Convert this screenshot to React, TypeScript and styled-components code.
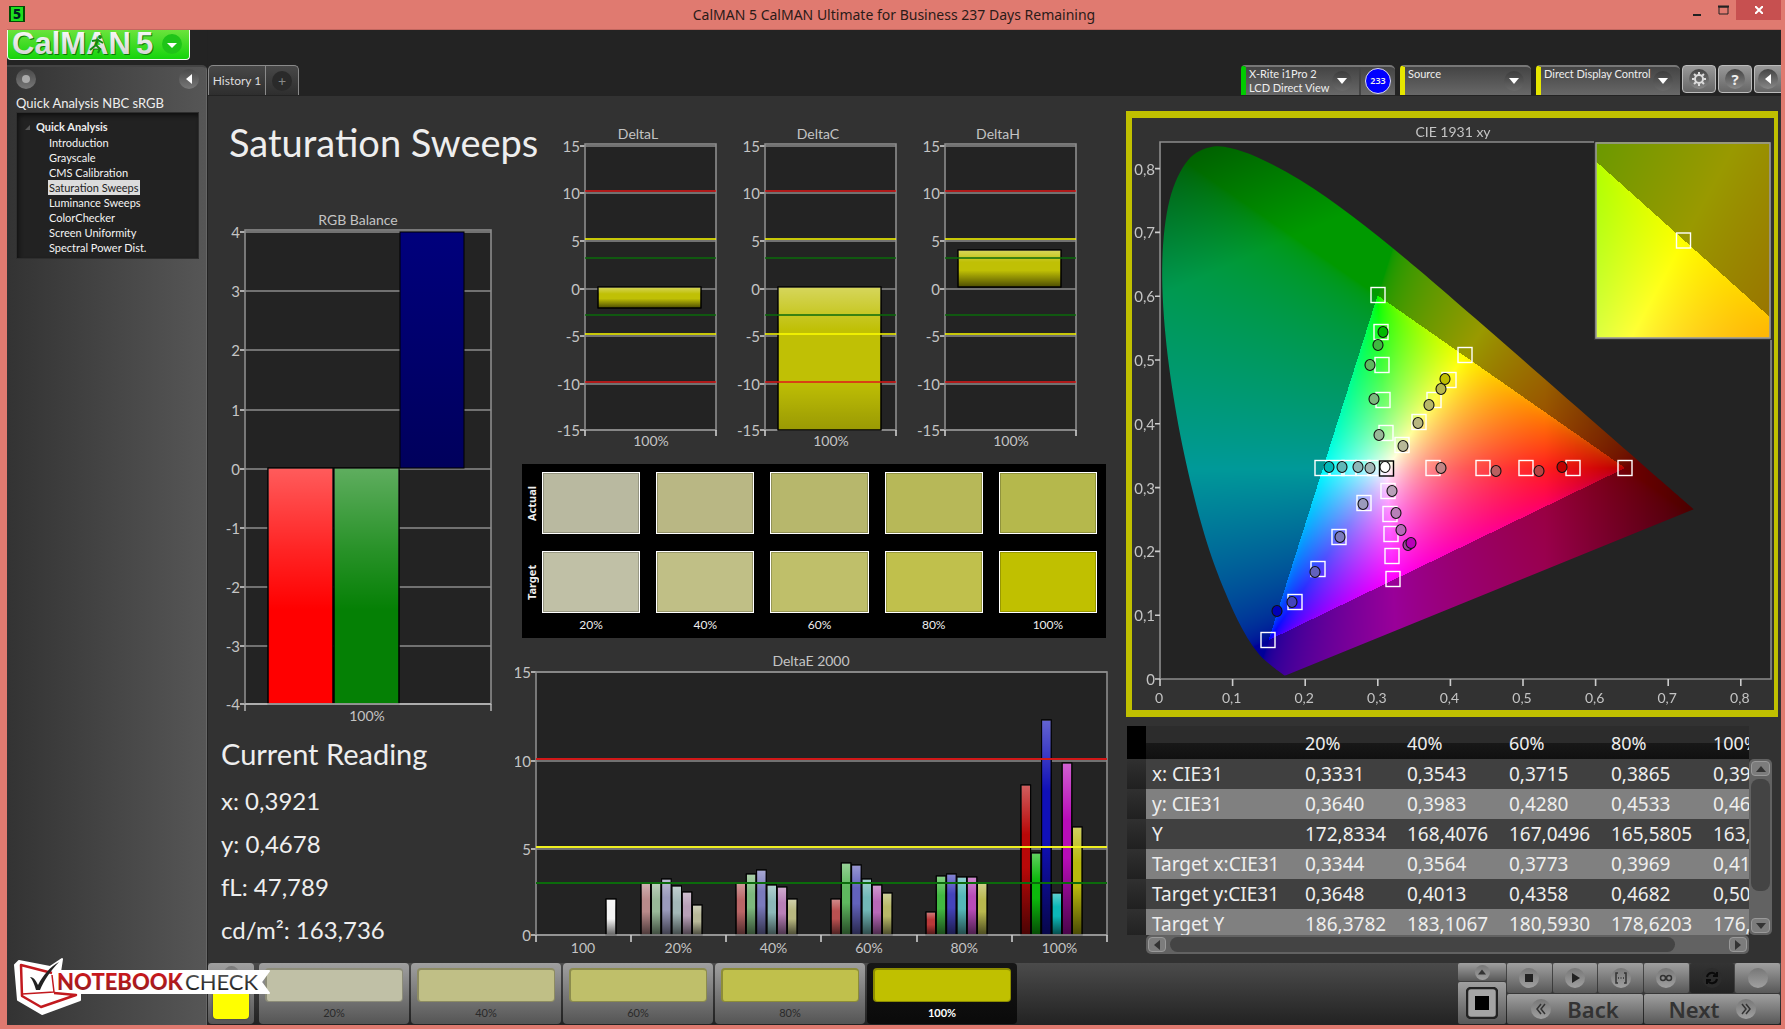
import React, { useEffect, useRef } from "react";
import styled, { createGlobalStyle } from "styled-components";

const sans = 'Lato, "Noto Sans", sans-serif';
const wide = '"Noto Sans", "Open Sans", sans-serif';
const grey = "#c4c4c4";

const GlobalStyle = createGlobalStyle`
  * { box-sizing: border-box; }
  body { margin: 0; background: #e07a70; font-family: ${sans}; color: #eee; }
  button { font-family: inherit; color: inherit; border: 0; padding: 0; margin: 0; background: none; cursor: pointer; }
  h1, h2, p, ul { margin: 0; padding: 0; font-weight: 400; }
  ul { list-style: none; }
  svg { display: block; }
`;

/* ---------- window frame ---------- */

const Frame = styled.div`
  min-height: 100vh;
  display: flex;
  flex-direction: column;
  padding: 0 4px 4px 7px;
`;

const TitleBar = styled.header`
  display: grid;
  grid-template-columns: 120px 1fr 120px;
  height: 30px;
  color: #2b1a18;
  border-bottom: 1px solid #c2675f;
`;

const AppIcon = styled.svg`
  margin: 6px 0 0 2px;
`;

const WindowTitle = styled.div`
  text-align: center;
  font-family: ${wide};
  font-size: 14px;
  line-height: 29px;
  white-space: nowrap;
`;

const WindowButtons = styled.div`
  display: flex;
  justify-content: flex-end;
  align-items: flex-start;
`;

const WindowButton = styled.button<{ $close?: boolean }>`
  width: ${(p) => (p.$close ? 45 : 26)}px;
  height: 20px;
  display: grid;
  place-items: center;
  background: ${(p) => (p.$close ? "#c75050" : "transparent")};
`;

const Body = styled.div`
  flex: 1;
  display: flex;
  background: #232323;
`;

/* ---------- sidebar ---------- */

const Left = styled.div`
  width: 200px;
  flex: none;
  display: flex;
  flex-direction: column;
  gap: 5px;
`;

const LogoButton = styled.button`
  width: 183px;
  height: 30px;
  border: 1px solid #f0fff0;
  border-top: 0;
  border-radius: 0 0 4px 4px;
  overflow: hidden;
  background: linear-gradient(#6be33c, #14d40c);
`;

const Sidebar = styled.nav`
  flex: 1;
  padding: 0 7px 0 9px;
  background: linear-gradient(90deg, #333, #565656);
  border-top: 2px solid #444;
  border-right: 1px solid #666;
  border-radius: 0 5px 0 0;
`;

const SideTools = styled.div`
  display: flex;
  justify-content: space-between;
  padding: 2px 0 5px;
`;

const RoundButton = styled.button`
  width: 20px;
  height: 20px;
  flex: none;
  display: grid;
  place-items: center;
  border-radius: 50%;
  background: linear-gradient(#4a4a4a, #777);
`;

const SideTitle = styled.h2`
  font-size: 13px;
  line-height: 18px;
  white-space: nowrap;
`;

const Tree = styled.div`
  padding: 6px 0 6px 8px;
  height: 147px;
  background: #222;
  border: 1px solid #2e2e2e;
  box-shadow: inset 2px 3px 4px #111;
`;

const TreeHead = styled.button`
  display: flex;
  align-items: center;
  gap: 6px;
  font-size: 11px;
  line-height: 16px;
  font-weight: 700;
`;

const TreeList = styled.ul`
  padding-left: 23px;
  height: 116px;
  display: flex;
  flex-direction: column;
  justify-content: space-between;
  align-items: flex-start;
`;

const TreeItem = styled.a<{ $active?: boolean }>`
  display: block;
  padding: 0 1px;
  font-size: 11px;
  line-height: 15px;
  white-space: nowrap;
  text-decoration: none;
  color: ${(p) => (p.$active ? "#222" : "#f4f4f4")};
  background: ${(p) => (p.$active ? "#dcdcdc" : "transparent")};
`;

/* ---------- top bar ---------- */

const Right = styled.div`
  flex: 1;
  min-width: 0;
  display: flex;
  flex-direction: column;
  border-left: 1px solid #222;
`;

const TopBar = styled.div`
  height: 66px;
  display: flex;
  justify-content: space-between;
  align-items: flex-end;
  overflow: hidden;
`;

const Tabs = styled.div`
  display: flex;
  height: 30px;
  margin-bottom: 1px;
`;

const Tab = styled.button<{ $last?: boolean }>`
  width: ${(p) => (p.$last ? 33 : 58)}px;
  font-size: 12px;
  line-height: 30px;
  color: #ddd;
  white-space: nowrap;
  display: grid;
  place-items: center;
  background: linear-gradient(#484848, #2e2e2e);
  border: solid #8a8a8a;
  border-width: 1px 1px 0 ${(p) => (p.$last ? 0 : 1)}px;
  border-radius: ${(p) => (p.$last ? "0 5px 0 0" : "5px 0 0 0")};
`;

const PlusDisc = styled.span`
  width: 20px;
  height: 20px;
  border-radius: 50%;
  background: #2a2a2a;
  color: #888;
  font-size: 14px;
  line-height: 20px;
`;

const Tools = styled.div`
  display: flex;
  align-items: flex-start;
  height: 31px;
`;

const Device = styled.button<{ $width: number; $mark: string }>`
  width: ${(p) => p.$width}px;
  height: 30px;
  display: flex;
  align-items: stretch;
  text-align: left;
  border-top: 2px solid #777;
  border-left: 5px solid ${(p) => p.$mark};
  border-radius: 4px 5px 0 0;
  background: linear-gradient(#444, #686868);
  & + & { margin-left: 5px; }
`;

const DeviceText = styled.span`
  flex: 1;
  padding-left: 3px;
  font-size: 11px;
  line-height: 14px;
  white-space: pre;
`;

const Chevron = styled.span`
  width: 20px;
  height: 20px;
  margin: 4px 7px 0 0;
  border-radius: 50%;
  display: grid;
  place-items: center;
  background: linear-gradient(#3c3c3c, #6a6a6a);
`;

const Count = styled.span`
  width: 36px;
  border-left: 2px solid #444;
  display: grid;
  place-items: center;
`;

const CountDisc = styled.span`
  width: 26px;
  height: 26px;
  border-radius: 50%;
  border: 1px solid #dde;
  background: #00f;
  font-family: ${wide};
  font-size: 9px;
  font-weight: 600;
  line-height: 24px;
  text-align: center;
`;

const ToolButton = styled.button<{ $cut?: boolean }>`
  width: ${(p) => (p.$cut ? 27 : 34)}px;
  height: 28px;
  margin-left: 2px;
  display: grid;
  place-items: center;
  border: 1px solid #bbb;
  border-right-width: ${(p) => (p.$cut ? 0 : 1)}px;
  border-radius: ${(p) => (p.$cut ? "4px 0 0 4px" : "4px")};
  background: linear-gradient(#999, #666);
`;

const ToolDisc = styled.span`
  width: 20px;
  height: 20px;
  border-radius: 50%;
  display: grid;
  place-items: center;
  background: linear-gradient(#444, #888);
  font-family: ${wide};
  font-size: 15px;
  font-weight: 700;
  line-height: 20px;
`;

/* ---------- main area ---------- */

const Main = styled.main`
  flex: 1;
  display: grid;
  grid-template-columns: 276fr 593fr 652fr;
  column-gap: 18px;
  padding: 0 3px 0 13px;
  background: #323232;
`;

const Column = styled.section<{ $top: number }>`
  min-width: 0;
  padding-top: ${(p) => p.$top}px;
`;

const PageTitle = styled.h1`
  padding-left: 8px;
  font-size: 38px;
  line-height: 48px;
  margin-bottom: 42px;
  white-space: nowrap;
`;

const Plot = styled.svg`
  width: 100%;
  height: auto;
`;

const ReadingTitle = styled.h2`
  margin: 5px 0 4px;
  font-size: 29px;
  line-height: 42px;
`;

const Reading = styled.p`
  font-size: 24px;
  line-height: 43px;
  white-space: nowrap;
`;

const DeltaRow = styled.div`
  display: grid;
  grid-template-columns: repeat(3, 1fr);
  padding: 0 13px 0 40px;
`;

const Swatches = styled.div`
  display: grid;
  grid-template-columns: 20px 1fr;
  grid-template-rows: 62px 62px 18px;
  row-gap: 17px;
  margin: 12px 2px 10px 7px;
  height: 174px;
  padding: 8px 9px 0 0;
  background: #000;
`;

const SwatchRow = styled.div<{ $labels?: boolean }>`
  grid-column: 2;
  display: grid;
  grid-template-columns: repeat(5, 1fr);
  column-gap: 16px;
  margin-top: ${(p) => (p.$labels ? -14 : 0)}px;
`;

const SideLabel = styled.div`
  writing-mode: vertical-rl;
  transform: rotate(180deg);
  font-family: ${wide};
  font-size: 11px;
  font-weight: 700;
  line-height: 20px;
  text-align: center;
`;

const Swatch = styled.div<{ $color: string }>`
  border: 1px solid #fff;
  background: ${(p) => p.$color};
  box-shadow: inset 0 0 0 1px #0003;
`;

const SwatchLabel = styled.div`
  font-size: 12px;
  line-height: 18px;
  text-align: center;
`;

const CieFrame = styled.div`
  display: grid;
  border: solid #c0c000;
  border-width: 7px 4px 7px 6px;
  & > * { grid-area: 1 / 1; }
`;

const GamutCanvas = styled.canvas`
  width: 100%;
  height: auto;
`;

const Label = styled.text`
  font-family: ${sans};
  font-size: 15px;
  fill: ${grey};
`;

const Heading = styled(Label)`
  font-size: 14px;
`;

/* ---------- data table ---------- */

const TableArea = styled.div`
  display: grid;
  grid-template-columns: 1fr 23px;
  margin: 9px 6px 0 1px;
`;

const TableClip = styled.div`
  height: 209px;
  overflow: hidden;
`;

const Table = styled.table`
  width: 682px;
  table-layout: fixed;
  border-collapse: collapse;
  font-family: ${wide};
  font-size: 19px;
  line-height: 24px;
`;

const HeadRow = styled.tr`
  height: 33px;
  background: linear-gradient(#2c2c2c 50%, #181818 50%, #101010);
`;

const Row = styled.tr<{ $light: boolean }>`
  height: 30px;
  background: ${(p) => (p.$light ? "#808080" : "#404040")};
`;

const Cell = styled.td`
  padding: 0 0 0 6px;
  text-align: left;
  font-weight: 400;
  white-space: nowrap;
`;
const HeadCell = styled(Cell).attrs({ as: "th" })`
  font-size: 18px;
`;
const RowName = styled(Cell).attrs({ as: "th" })``;

const Grip = styled.td<{ $head?: boolean }>`
  padding: 0;
  background: ${(p) => (p.$head ? "#000" : "linear-gradient(#303030, #202020)")};
`;

const ScrollV = styled.div`
  margin-top: 33px;
  padding: 2px;
  display: flex;
  flex-direction: column;
  gap: 3px;
  border-radius: 5px;
  background: #626262;
`;

const ScrollH = styled.div`
  margin-left: 19px;
  padding: 2px;
  display: flex;
  gap: 4px;
  border-radius: 5px;
  background: #626262;
`;

const ScrollButton = styled.button<{ $w: number }>`
  width: ${(p) => p.$w}px;
  height: 15px;
  flex: none;
  display: grid;
  place-items: center;
  border: 1px solid #999;
  border-radius: 4px;
  background: #7c7c7c;
`;

const Track = styled.div<{ $column?: boolean }>`
  flex: 1;
  display: flex;
  flex-direction: ${(p) => (p.$column ? "column" : "row")};
`;

const Thumb = styled.div<{ $part: string }>`
  flex: 0 0 ${(p) => p.$part};
  border-radius: 8px;
  background: #444;
`;

/* ---------- bottom bar ---------- */

const Bottom = styled.footer`
  height: 62px;
  display: flex;
  background: linear-gradient(#4b4b4b, #222);
`;

const Strip = styled.div`
  flex: 1;
  display: flex;
  gap: 2px;
`;

const Patch = styled.button<{ $active?: boolean }>`
  width: 150px;
  height: 61px;
  padding: 5px 6px 0;
  display: flex;
  flex-direction: column;
  border-radius: 4px;
  color: ${(p) => (p.$active ? "#fff" : "#2a2a2a")};
  background: ${(p) => (p.$active ? "linear-gradient(#161616, #0a0a0a)" : "linear-gradient(#a0a0a0, #555)")};
  font-size: 11px;
  font-weight: ${(p) => (p.$active ? 700 : 400)};
  line-height: 22px;
`;

const PatchColor = styled.span<{ $color: string }>`
  width: 100%;
  height: 36px;
  border-radius: 4px;
  border: 1px solid #0004;
  border-width: 2px 1px 1px 2px;
  background: ${(p) => p.$color};
`;

const PatchLabel = styled.span`
  width: 100%;
  text-align: center;
`;

const CurrentPatch = styled.button`
  width: 46px;
  height: 61px;
  margin-right: 3px;
  padding: 3px 5px 5px;
  display: flex;
  flex-direction: column;
  align-items: center;
  justify-content: space-between;
  border-radius: 4px;
  background: linear-gradient(#a0a0a0, #555);
`;

const CurrentColor = styled.span`
  width: 36px;
  height: 36px;
  border-radius: 4px;
  background: #ff0;
  box-shadow: 0 0 2px #333;
`;

const Transport = styled.div`
  display: grid;
  grid-template-columns: 48px 273px;
  gap: 1px;
  padding-right: 1px;
  height: 61px;
`;

const StopColumn = styled.div`
  display: grid;
  grid-template-rows: 18px 1fr;
  gap: 1px;
`;

const Keys = styled.div`
  display: grid;
  grid-template-columns: repeat(6, 1fr);
  grid-template-rows: 30px 30px;
  gap: 1px;
`;

const Key = styled.button<{ $dark?: boolean; $wide?: boolean }>`
  grid-column: span ${(p) => (p.$wide ? 3 : 1)};
  display: flex;
  align-items: center;
  justify-content: center;
  gap: 16px;
  border-radius: 2px;
  color: #333;
  font-family: ${wide};
  font-size: 22px;
  line-height: 28px;
  font-weight: 600;
  background: ${(p) => (p.$dark ? "linear-gradient(#333, #222)" : "linear-gradient(#a0a0a0, #585858)")};
`;

const KeyDisc = styled.span<{ $dark?: boolean }>`
  width: 20px;
  height: 20px;
  border-radius: 50%;
  display: grid;
  place-items: center;
  background: ${(p) => (p.$dark ? "#2c2c2c" : "linear-gradient(#777, #a0a0a0)")};
`;

const SmallDisc = styled(KeyDisc)`
  width: 15px;
  height: 15px;
`;

const Watermark = styled.svg`
  position: absolute;
  left: 14px;
  bottom: 14px;
`;

/* ---------- drawings ---------- */

const Arrow = ({ dir, fill = "#fff", s = 10 }: { dir: "up" | "down" | "left" | "right"; fill?: string; s?: number }) => {
  const d = {
    up: "M0 8 5 2 10 8z",
    down: "M0 2 5 8 10 2z",
    left: "M8 0 2 5 8 10z",
    right: "M2 0 8 5 2 10z",
  }[dir];
  return (
    <svg width={s} height={s} viewBox="0 0 10 10">
      <path d={d} fill={fill} />
    </svg>
  );
};

const Logo = () => (
  <svg width="181" height="29" viewBox="0 0 181 29">
    <defs>
      <linearGradient id="lg" x1="0" y1="0" x2="0" y2="1">
        <stop offset="0" stopColor="#fff" />
        <stop offset="1" stopColor="#ccc" />
      </linearGradient>
    </defs>
    <g fontFamily='"Liberation Sans", Arial, sans-serif' fontWeight="700" fontSize="31">
      <text x="5" y="25" fill="#0a7a08">CalMAN</text>
      <text x="4" y="24" fill="url(#lg)">CalMAN</text>
      <text x="129" y="25" fill="#0a7a08">5</text>
      <text x="128" y="24" fill="url(#lg)">5</text>
    </g>
    <g stroke="#148a10" strokeWidth="2" fill="none">
      <circle cx="92" cy="7" r="1" />
      <path d="M84 11 90 10 95 13M90 10 88 15 92 19 90 23M88 15 82 20" />
    </g>
    <circle cx="164" cy="14" r="10" fill="#1fc418" />
    <path d="M159 13h10l-5 5z" fill="#fff" />
  </svg>
);

const Gear = () => (
  <svg width="16" height="16" viewBox="0 0 16 16" stroke="#ddd" fill="none">
    <circle cx="8" cy="8" r="4" strokeWidth="2" />
    <g strokeWidth="2">
      {[0, 45, 90, 135, 180, 225, 270, 315].map((a) => (
        <path key={a} d="M8 1v2.5" transform={`rotate(${a} 8 8)`} />
      ))}
    </g>
  </svg>
);

type Bar = { x: number; w: number; y0: number; y1: number; color: string };

const Gradients = () => (
  <defs>
    <linearGradient id="sheen" x1="0" y1="0" x2="0" y2="1">
      <stop offset="0" stopColor="#fff" stopOpacity=".35" />
      <stop offset=".33" stopColor="#fff" stopOpacity="0" />
      <stop offset=".55" stopColor="#000" stopOpacity="0" />
      <stop offset="1" stopColor="#000" stopOpacity=".6" />
    </linearGradient>
    <linearGradient id="gloss" x1="0" y1="0" x2="0" y2="1">
      <stop offset="0" stopColor="#fff" stopOpacity=".36" />
      <stop offset=".35" stopColor="#fff" stopOpacity="0.14" />
      <stop offset=".6" stopColor="#fff" stopOpacity="0" />
    </linearGradient>
    <linearGradient id="clipped" x1="0" y1="0" x2="0" y2="1">
      <stop offset="0" stopColor="#fff" stopOpacity=".35" />
      <stop offset=".3" stopColor="#fff" stopOpacity="0" />
      <stop offset=".65" stopColor="#000" stopOpacity="0" />
      <stop offset="1" stopColor="#000" stopOpacity=".2" />
    </linearGradient>
  </defs>
);

const BarShape = ({ b, shade = "sheen" }: { b: Bar; shade?: string }) => (
  <g stroke="#000" strokeWidth="1">
    <rect x={b.x} y={b.y0} width={b.w} height={b.y1 - b.y0} fill={b.color} />
    <rect x={b.x} y={b.y0} width={b.w} height={b.y1 - b.y0} fill={`url(#${shade})`} />
  </g>
);

type AxisProps = {
  x0: number; x1: number; y0: number; y1: number;
  rows: [string, number][];
};

const Axes = ({ x0, x1, y0, y1, rows }: AxisProps) => (
  <>
    <rect x={x0} y={y0} width={x1 - x0} height={y1 - y0} fill="#232323" />
    <g stroke="#8c8c8c" strokeWidth="1.4">
      {rows.map(([t, y]) => <path key={t} d={`M${x0} ${y}H${x1}`} />)}
    </g>
    {rows.map(([t, y]) => (
      <g key={t}>
        <path d={`M${x0 - 5} ${y}h5`} stroke="#ccc" strokeWidth="1.6" />
        <Label x={x0 - 5} y={y + 6} textAnchor="end">{t}</Label>
      </g>
    ))}
    <rect x={x0} y={y0} width={x1 - x0} height={y1 - y0} fill="none" stroke="#8c8c8c" strokeWidth="1.6" />
  </>
);

const RgbBalance = () => (
  <Plot viewBox="0 0 276 520" role="img" aria-label="RGB Balance">
    <defs>
      <linearGradient id="navy" x1="0" y1="0" x2="0" y2="1">
        <stop offset="0" stopColor="#00007c" />
        <stop offset="1" stopColor="#00005c" />
      </linearGradient>
    </defs>
    <Gradients />
    <Heading x="137" y="17" textAnchor="middle">RGB Balance</Heading>
    <Axes x0={24} x1={270} y0={22} y1={496}
      rows={[["4", 24], ["3", 83], ["2", 142], ["1", 202], ["0", 261], ["-1", 320], ["-2", 379], ["-3", 438], ["-4", 496]]} />
    <BarShape b={{ x: 47, w: 65, y0: 260, y1: 496, color: "#f00" }} shade="gloss" />
    <BarShape b={{ x: 113, w: 65, y0: 260, y1: 496, color: "#058005" }} shade="gloss" />
    <rect x="179" y="24" width="64" height="236" fill="url(#navy)" stroke="#000" />
    <path d="M24 496v7M270 496v7M24 496H270" stroke="#bbb" strokeWidth="1.4" />
    <Heading x="146" y="513" textAnchor="middle">100%</Heading>
  </Plot>
);

const limits: [string, number][] = [
  ["#e01818", 69], ["#ff0", 117], ["#0b6b0b", 136], ["#0b6b0b", 193], ["#ff0", 212], ["#e01818", 260],
];

const DeltaChart = ({ name, bar }: { name: string; bar: [number, number] }) => (
  <Plot viewBox="0 0 180 330" role="img" aria-label={name}>
    <Heading x="83" y="17" textAnchor="middle">{name}</Heading>
    <Axes x0={30} x1={161} y0={22} y1={308}
      rows={[["15", 24], ["10", 71], ["5", 119], ["0", 167], ["-5", 214], ["-10", 262], ["-15", 308]]} />
    <BarShape b={{ x: 43, w: 103, y0: bar[0], y1: bar[1], color: "#c0c005" }}
      shade={bar[1] > 300 ? "clipped" : "sheen"} />
    <g strokeWidth="1.6">
      {limits.map(([c, y]) => <path key={y} d={`M30 ${y}H161`} stroke={c} />)}
    </g>
    <path d="M30 308v6M161 308v6" stroke="#ccc" strokeWidth="1.6" />
    <Heading x="96" y="324" textAnchor="middle">100%</Heading>
  </Plot>
);

const groups: { x: number; tops: number[]; colors: string[] }[] = [
  { x: 126, tops: [235, 235, 231, 238, 244, 257], colors: ["#b98a8a", "#98b898", "#9a9abc", "#a3b8b8", "#b8a0b8", "#b8b898"] },
  { x: 221, tops: [235, 226, 222, 237, 239, 251], colors: ["#b96666", "#7db87d", "#7a7abc", "#8cb8b8", "#b880b8", "#b8b880"] },
  { x: 316, tops: [251, 215, 217, 231, 237, 245], colors: ["#b95050", "#5fb85f", "#6262bc", "#72b8b8", "#b868b8", "#b8b868"] },
  { x: 411, tops: [264, 228, 226, 229, 229, 235], colors: ["#b93838", "#42b842", "#4444bc", "#55b8b8", "#b84cb8", "#b8b84e"] },
  { x: 506, tops: [137, 205, 72, 245, 115, 179], colors: ["#b80808", "#0cb80c", "#1010b8", "#0cb8b8", "#b80cb8", "#b8b80c"] },
];

const DeltaE = () => (
  <Plot viewBox="0 0 593 312" role="img" aria-label="DeltaE 2000">
    <Heading x="296" y="18" textAnchor="middle">DeltaE 2000</Heading>
    <Axes x0={21} x1={592} y0={24} y1={287} rows={[["15", 24], ["10", 113], ["5", 201], ["0", 287]]} />
    <BarShape b={{ x: 91, w: 10, y0: 251, y1: 287, color: "#f4f4f4" }} />
    {groups.map((g) => g.tops.map((t, i) => (
      <BarShape key={`${g.x}-${i}`} b={{ x: g.x + i * 10.3, w: 9.6, y0: t, y1: 287, color: g.colors[i] }} />
    )))}
    <path d="M21 287H592" stroke="#999" strokeWidth="1.6" />
    <g strokeWidth="1.8">
      <path d="M21 111H592" stroke="#d01818" />
      <path d="M21 199H592" stroke="#f0f020" />
      <path d="M21 235H592" stroke="#0b6b0b" />
    </g>
    <path d="M21 287v7M116 287v7M211 287v7M306 287v7M402 287v7M497 287v7M592 287v7" stroke="#ccc" strokeWidth="1.6" />
    {["100", "20%", "40%", "60%", "80%", "100%"].map((t, i) => (
      <Heading key={i} x={68 + i * 95.3} y="305" textAnchor="middle">{t}</Heading>
    ))}
  </Plot>
);

/* Spectral locus, CIE 1931 2° observer */
const locus = [
  [0.1741, 0.005], [0.1714, 0.0051], [0.1644, 0.0109], [0.1566, 0.0177], [0.144, 0.0297], [0.1355, 0.0399],
  [0.1241, 0.0578], [0.1096, 0.0868], [0.0913, 0.1327], [0.0687, 0.2007], [0.0454, 0.295], [0.0235, 0.4127],
  [0.0082, 0.5384], [0.0039, 0.6548], [0.0139, 0.7502], [0.0389, 0.812], [0.0743, 0.8338], [0.1142, 0.8262],
  [0.1547, 0.8059], [0.1929, 0.7816], [0.2296, 0.7543], [0.2658, 0.7243], [0.3016, 0.6923], [0.3373, 0.6589],
  [0.3731, 0.6245], [0.4441, 0.5547], [0.5125, 0.4866], [0.5752, 0.4242], [0.627, 0.3725], [0.6658, 0.334],
  [0.6915, 0.3083], [0.719, 0.2809], [0.7347, 0.2653],
];

/* Colour of a chromaticity: brightest sRGB value, dimmed outside the sRGB triangle */
function shade(x: number, y: number): number[] {
  const X = x / y;
  const Z = (1 - x - y) / y;
  const lin = [
    3.2406 * X - 1.5372 - 0.4986 * Z,
    -0.9689 * X + 1.8758 + 0.0415 * Z,
    0.0557 * X - 0.204 + 1.057 * Z,
  ];
  const outside = Math.min(...lin) < -0.001;
  const max = Math.max(...lin);
  let k = outside ? 0.6 : 1;
  k *= 1 - Math.max(0, x - 0.53) * 2.5;
  k *= 1 - Math.max(0, y - x * 0.5 - 0.6) * 1.8;
  const enc = lin.map((v) => {
    const n = Math.max(0, v / max);
    return n <= 0.0031308 ? 12.92 * n : 1.055 * Math.pow(n, 1 / 2.4) - 0.055;
  });
  const low = Math.min(...enc);
  return enc.map((c) => 255 * k * Math.max(0, 1 - (1 - c) * (1 + low)));
}

function fillRegion(w: number, h: number, at: (px: number, py: number) => [number, number]) {
  const c = document.createElement("canvas");
  c.width = w;
  c.height = h;
  const ctx = c.getContext("2d")!;
  const img = ctx.createImageData(w, h);
  for (let j = 0; j < h; j++) {
    for (let i = 0; i < w; i++) {
      const [x, y] = at(i, j);
      const rgb = shade(x, Math.max(y, 0.001));
      const o = (j * w + i) * 4;
      img.data[o] = rgb[0];
      img.data[o + 1] = rgb[1];
      img.data[o + 2] = rgb[2];
      img.data[o + 3] = 255;
    }
  }
  ctx.putImageData(img, 0, 0);
  return c;
}

const OX = 27.5, OY = 560.5, SX = 727, SY = 638;

const Gamut = () => {
  const ref = useRef<HTMLCanvasElement>(null);
  useEffect(() => {
    const ctx = ref.current?.getContext("2d");
    if (!ctx) return;
    ctx.fillStyle = "#323232";
    ctx.fillRect(0, 0, 642, 592);
    ctx.fillStyle = "#232323";
    ctx.fillRect(28, 24, 611, 537);
    ctx.save();
    ctx.beginPath();
    locus.forEach(([x, y], n) => {
      const px = OX + x * SX, py = OY - y * SY;
      if (n === 0) ctx.moveTo(px, py);
      else {
        const [ax, ay] = locus[n - 1];
        const [bx, by] = locus[Math.max(0, n - 2)];
        const [cx, cy] = locus[Math.min(locus.length - 1, n + 1)];
        ctx.bezierCurveTo(
          OX + (ax + (x - bx) / 6) * SX, OY - (ay + (y - by) / 6) * SY,
          OX + (x - (cx - ax) / 6) * SX, OY - (y - (cy - ay) / 6) * SY,
          px, py,
        );
      }
    });
    ctx.closePath();
    ctx.clip();
    ctx.drawImage(fillRegion(642, 592, (i, j) => [(i + 0.5 - OX) / SX, (OY - j - 0.5) / SY]), 0, 0);
    ctx.restore();
    ctx.fillStyle = "#323232";
    ctx.fillRect(462, 23, 180, 199);
    ctx.drawImage(fillRegion(174, 196, (i, j) => [0.3693 + (0.1 * i) / 174, 0.5553 - (0.1 * j) / 196]), 464, 24);
  }, []);
  return <GamutCanvas ref={ref} width={642} height={592} />;
};

/* Marker centres in chart units */
const targets: [number, number][] = [
  [246, 177], [249, 214], [250, 247], [251, 282], [254, 315],
  [333, 237], [317, 262], [302, 282], [287, 304], [270, 327],
  [301, 350], [351, 350], [394, 350], [441, 350], [493, 350],
  [256, 373], [258, 396], [259, 416], [260, 438], [261, 461],
  [232, 385], [207, 419], [186, 451], [163, 484], [136, 522],
  [190, 350], [205, 350], [217, 350], [231, 350], [243, 350],
];

const readings: [number, number, string][] = [
  [246, 227, "#3fb83f"], [251, 214, "#00b900"], [238, 247, "#5fb85f"], [242, 281, "#7db87d"], [247, 317, "#98b898"],
  [309, 271, "#b8b84e"], [313, 261, "#c0c000"], [297, 287, "#b8b868"], [286, 305, "#b8b880"], [271, 328, "#b8b898"],
  [309, 350, "#c08585"], [364, 353, "#b96060"], [407, 353, "#b94444"], [430, 349, "#c00000"],
  [197, 349, "#00b8b8"], [210, 349, "#60b8b8"], [226, 349, "#8cb8b8"], [238, 350, "#a3b8b8"],
  [231, 386, "#9a9abc"], [208, 419, "#7a7abc"], [183, 454, "#6262bc"], [160, 484, "#4444bc"], [145, 493, "#0000b8"],
  [260, 373, "#b8a0b8"], [264, 395, "#b880b8"], [269, 412, "#b868b8"], [276, 427, "#a040a0"], [279, 425, "#b800b8"],
  [253, 349, "#fff"],
];

const Cie = () => (
  <CieFrame>
    <Gamut />
    <Plot viewBox="0 0 642 592" role="img" aria-label="CIE 1931 xy">
      <Heading x="321" y="19" textAnchor="middle">CIE 1931 xy</Heading>
      <path d="M462 24H28V561H639V222" fill="none" stroke="#8c8c8c" strokeWidth="1.6" />
      <rect x="464" y="25" width="174" height="195" fill="none" stroke="#999" strokeWidth="1.6" />
      {[0, 1, 2, 3, 4, 5, 6, 7, 8].map((n) => {
        const t = n === 0 ? "0" : `0,${n}`;
        return (
          <g key={n}>
            <path d={`M23 ${561 - n * 63.8}h5M${28 + n * 72.6} 561v7`} stroke="#ccc" strokeWidth="1.6" />
            <Label x="23" y={567 - n * 63.8} textAnchor="end">{t}</Label>
            <Heading x={27 + n * 72.6} y="585" textAnchor="middle">{t}</Heading>
          </g>
        );
      })}
      <g fill="none" stroke="#fff" strokeWidth="1.4">
        {targets.map(([x, y], i) => <rect key={i} x={x - 7} y={y - 7.5} width="14" height="15" />)}
        <rect x="544.5" y="115" width="14" height="15" />
      </g>
      <rect x="247.5" y="343" width="14" height="15" fill="none" stroke="#000" strokeWidth="1.4" />
      {readings.map(([x, y, c], i) => (
        <ellipse key={i} cx={x} cy={y} rx="5" ry="5.5" fill={c} stroke="#111" strokeWidth="1.1" />
      ))}
    </Plot>
  </CieFrame>
);

const NotebookCheck = () => (
  <Watermark width="258" height="58" viewBox="0 0 258 58" role="img" aria-label="Notebookcheck">
    <defs>
      <linearGradient id="nbRed" x1="0" y1="0" x2="0" y2="1">
        <stop offset="0" stopColor="#d8171c" />
        <stop offset="1" stopColor="#8c1d1f" />
      </linearGradient>
      <linearGradient id="nbDark" x1="0" y1="0" x2="0" y2="1">
        <stop offset="0" stopColor="#666" />
        <stop offset="1" stopColor="#111" />
      </linearGradient>
    </defs>
    <path d="M40 14H255l-8 11 8 11H66v7L28 57 4 43 1 8 5 4 36 10 48 2 46 15z" fill="#fff" stroke="#fff" strokeWidth="2" strokeLinejoin="round" />
    <g fill="none" stroke="#c2191e" strokeWidth="2.5" strokeLinejoin="round">
      <path d="M38 16 7 8 8 39 27 50 62 38 40 36" />
      <path d="M38 18 40 35 8 37" strokeWidth="1.5" />
    </g>
    <path d="M16 20c4 0 6 4 8 8C29 18 36 10 45 5 36 14 30 24 26 33h-4C20 27 19 23 16 20z" fill="#222" />
    <g fontFamily='Lato, sans-serif' fontSize="22">
      <text x="43" y="33" fontWeight="900" fill="url(#nbRed)">NOTEBOOK</text>
      <text x="171" y="33" fill="url(#nbDark)">CHECK</text>
    </g>
  </Watermark>
);

/* ---------- content ---------- */

const pages = ["Introduction", "Grayscale", "CMS Calibration", "Saturation Sweeps", "Luminance Sweeps", "ColorChecker", "Screen Uniformity", "Spectral Power Dist."];
const levels = ["20%", "40%", "60%", "80%", "100%"];
const actual = ["#b9b9a0", "#b9b784", "#b7b76c", "#b7b858", "#b5b84c"];
const target = ["#c0c0a6", "#c0bf86", "#bfbf6a", "#c0c04c", "#c0c000"];
const rows: string[][] = [
  ["x: CIE31", "0,3331", "0,3543", "0,3715", "0,3865", "0,3921"],
  ["y: CIE31", "0,3640", "0,3983", "0,4280", "0,4533", "0,4678"],
  ["Y", "172,8334", "168,4076", "167,0496", "165,5805", "163,7360"],
  ["Target x:CIE31", "0,3344", "0,3564", "0,3773", "0,3969", "0,4193"],
  ["Target y:CIE31", "0,3648", "0,4013", "0,4358", "0,4682", "0,5053"],
  ["Target Y", "186,3782", "183,1067", "180,5930", "178,6203", "176,4310"],
];

const Ink = ({ children }: { children?: React.ReactNode }) => (
  <svg width="16" height="16" viewBox="0 0 16 16" fill="none" stroke="#333" strokeWidth="1.5">{children}</svg>
);

export default function App() {
  return (
    <Frame>
      <GlobalStyle />
      <TitleBar>
        <AppIcon width="16" height="16" viewBox="0 0 16 16">
          <rect width="16" height="16" fill="#064a06" />
          <rect x="2" y="1" width="12" height="14" fill="#1ee01e" />
          <text x="8" y="13" textAnchor="middle" fontFamily={wide} fontWeight="800" fontSize="14" fill="#022">5</text>
        </AppIcon>
        <WindowTitle>CalMAN 5 CalMAN Ultimate for Business 237 Days Remaining</WindowTitle>
        <WindowButtons>
          <WindowButton aria-label="Minimize">
            <svg width="10" height="12"><path d="M1 11h8" stroke="#222" strokeWidth="2" /></svg>
          </WindowButton>
          <WindowButton aria-label="Maximize">
            <svg width="11" height="10"><path d="M1 2h9v7H1z" fill="none" stroke="#222" strokeWidth="1" /><path d="M0 1.5h11" stroke="#222" strokeWidth="2" /></svg>
          </WindowButton>
          <WindowButton $close aria-label="Close">
            <svg width="8" height="8"><path d="M0 0 8 8M8 0 0 8" stroke="#fff" strokeWidth="2" /></svg>
          </WindowButton>
        </WindowButtons>
      </TitleBar>
      <Body>
        <Left>
          <LogoButton aria-label="CalMAN menu"><Logo /></LogoButton>
          <Sidebar>
            <SideTools>
              <RoundButton aria-label="Record">
                <svg width="8" height="8"><circle cx="4" cy="4" r="4" fill="#aaa" /></svg>
              </RoundButton>
              <RoundButton aria-label="Collapse"><Arrow dir="left" /></RoundButton>
            </SideTools>
            <SideTitle>Quick Analysis NBC sRGB</SideTitle>
            <Tree>
              <TreeHead>
                <svg width="5" height="5"><path d="M5 0V5H0z" fill="#555" /></svg>
                Quick Analysis
              </TreeHead>
              <TreeList>
                {pages.map((p) => (
                  <li key={p}><TreeItem href="#" $active={p === "Saturation Sweeps"}>{p}</TreeItem></li>
                ))}
              </TreeList>
            </Tree>
          </Sidebar>
        </Left>
        <Right>
          <TopBar>
            <Tabs>
              <Tab>History 1</Tab>
              <Tab $last aria-label="Add history"><PlusDisc>+</PlusDisc></Tab>
            </Tabs>
            <Tools>
              <Device $width={154} $mark="#0c0">
                <DeviceText>{"X-Rite i1Pro 2\nLCD Direct View"}</DeviceText>
                <Chevron><Arrow dir="down" /></Chevron>
                <Count><CountDisc>233</CountDisc></Count>
              </Device>
              <Device $width={131} $mark="#e6e600">
                <DeviceText>Source</DeviceText>
                <Chevron><Arrow dir="down" /></Chevron>
              </Device>
              <Device $width={144} $mark="#e6e600">
                <DeviceText>Direct Display Control</DeviceText>
                <Chevron><Arrow dir="down" /></Chevron>
              </Device>
              <ToolButton aria-label="Settings"><ToolDisc><Gear /></ToolDisc></ToolButton>
              <ToolButton aria-label="Help"><ToolDisc>?</ToolDisc></ToolButton>
              <ToolButton $cut aria-label="Collapse panel"><ToolDisc><Arrow dir="left" /></ToolDisc></ToolButton>
            </Tools>
          </TopBar>
          <Main>
            <Column $top={22}>
              <PageTitle>Saturation Sweeps</PageTitle>
              <RgbBalance />
              <ReadingTitle>Current Reading</ReadingTitle>
              <Reading>x: 0,3921</Reading>
              <Reading>y: 0,4678</Reading>
              <Reading>fL: 47,789</Reading>
              <Reading>cd/m²: 163,736</Reading>
            </Column>
            <Column $top={26}>
              <DeltaRow>
                <DeltaChart name="DeltaL" bar={[165, 186]} />
                <DeltaChart name="DeltaC" bar={[165, 308]} />
                <DeltaChart name="DeltaH" bar={[128, 165]} />
              </DeltaRow>
              <Swatches>
                <SideLabel>Actual</SideLabel>
                <SwatchRow>{actual.map((c) => <Swatch key={c} $color={c} />)}</SwatchRow>
                <SideLabel>Target</SideLabel>
                <SwatchRow>{target.map((c) => <Swatch key={c} $color={c} />)}</SwatchRow>
                <SwatchRow $labels>{levels.map((l) => <SwatchLabel key={l}>{l}</SwatchLabel>)}</SwatchRow>
              </Swatches>
              <DeltaE />
            </Column>
            <Column $top={15}>
              <Cie />
              <TableArea>
                <TableClip>
                  <Table>
                    <colgroup>
                      <col style={{ width: 19 }} />
                      <col style={{ width: 153 }} />
                      {levels.map((l) => <col key={l} style={{ width: 102 }} />)}
                    </colgroup>
                    <thead>
                      <HeadRow>
                        <Grip $head />
                        <Cell />
                        {levels.map((l) => <HeadCell key={l} scope="col">{l}</HeadCell>)}
                      </HeadRow>
                    </thead>
                    <tbody>
                      {rows.map((r, i) => (
                        <Row key={r[0]} $light={i % 2 === 1}>
                          <Grip />
                          <RowName scope="row">{r[0]}</RowName>
                          {r.slice(1).map((v) => <Cell key={v}>{v}</Cell>)}
                        </Row>
                      ))}
                    </tbody>
                  </Table>
                </TableClip>
                <ScrollV>
                  <ScrollButton $w={19} aria-label="Scroll up"><Arrow dir="up" fill="#333" /></ScrollButton>
                  <Track $column><Thumb $part="82%" /></Track>
                  <ScrollButton $w={19} aria-label="Scroll down"><Arrow dir="down" fill="#333" /></ScrollButton>
                </ScrollV>
                <ScrollH>
                  <ScrollButton $w={18} aria-label="Scroll left"><Arrow dir="left" fill="#333" /></ScrollButton>
                  <Track><Thumb $part="91%" /></Track>
                  <ScrollButton $w={18} aria-label="Scroll right"><Arrow dir="right" fill="#333" /></ScrollButton>
                </ScrollH>
              </TableArea>
            </Column>
          </Main>
          <Bottom>
            <Strip>
              <CurrentPatch aria-label="Current pattern">
                <SmallDisc><Arrow dir="up" fill="#333" s={7} /></SmallDisc>
                <CurrentColor />
              </CurrentPatch>
              {levels.map((l, i) => (
                <Patch key={l} $active={i === 4}>
                  <PatchColor $color={target[i]} />
                  <PatchLabel>{l}</PatchLabel>
                </Patch>
              ))}
            </Strip>
            <Transport>
              <StopColumn>
                <Key aria-label="Expand"><SmallDisc><Arrow dir="up" fill="#333" s={8} /></SmallDisc></Key>
                <Key aria-label="Pattern window">
                  <svg width="32" height="32"><rect x="1" y="1" width="30" height="30" rx="4" fill="#a4a4a4" stroke="#222" strokeWidth="2.5" /><rect x="9" y="9" width="14" height="14" fill="#000" /></svg>
                </Key>
              </StopColumn>
              <Keys>
                <Key aria-label="Stop"><KeyDisc><Ink><path d="M4 4h8v8H4z" fill="#222" stroke="none" /></Ink></KeyDisc></Key>
                <Key aria-label="Play"><KeyDisc><Ink><path d="M5 3v10l8-5z" fill="#222" stroke="none" /></Ink></KeyDisc></Key>
                <Key aria-label="Read series"><KeyDisc><Ink><path d="M5 3H3v10h2M11 3h2v10h-2M5 8h1M7.500 8h1M10 8h1" /></Ink></KeyDisc></Key>
                <Key aria-label="Continuous"><KeyDisc><Ink><circle cx="5" cy="8" r="2.500" /><circle cx="11" cy="8" r="2.500" /></Ink></KeyDisc></Key>
                <Key $dark aria-label="Refresh"><KeyDisc $dark><svg width="16" height="16" fill="none" stroke="#0a0a0a" strokeWidth="2"><path d="M3 7a5 5 0 0 1 9-2M13 2v4H9M13 9a5 5 0 0 1-9 2M3 14v-4h4" /></svg></KeyDisc></Key>
                <Key aria-label="Idle"><KeyDisc /></Key>
                <Key $wide><KeyDisc><Ink><path d="M8 3 4 8l4 5M12 3 8 8l4 5" /></Ink></KeyDisc>Back</Key>
                <Key $wide>Next<KeyDisc><Ink><path d="M4 3l4 5-4 5M8 3l4 5-4 5" /></Ink></KeyDisc></Key>
              </Keys>
            </Transport>
          </Bottom>
        </Right>
      </Body>
      <NotebookCheck />
    </Frame>
  );
}
